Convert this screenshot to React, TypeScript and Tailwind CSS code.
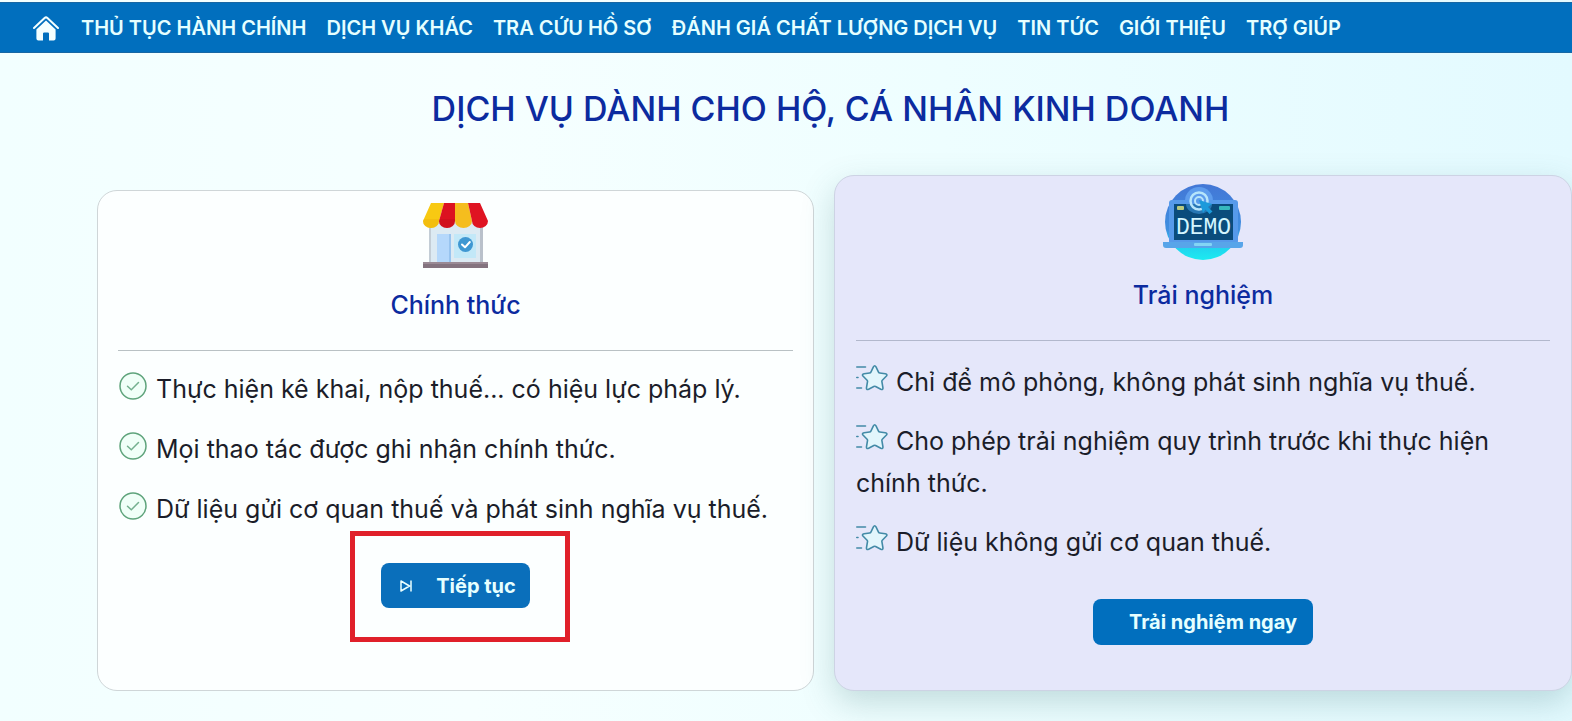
import type { ReactNode } from "react";

const NAV_ITEMS = [
  "THỦ TỤC HÀNH CHÍNH",
  "DỊCH VỤ KHÁC",
  "TRA CỨU HỒ SƠ",
  "ĐÁNH GIÁ CHẤT LƯỢNG DỊCH VỤ",
  "TIN TỨC",
  "GIỚI THIỆU",
  "TRỢ GIÚP",
];

function HomeIcon() {
  return (
    <svg viewBox="0 0 26 26" className="h-[26px] w-[26px]" aria-hidden="true">
      <path
        d="M1 13 L11.6 3 Q13 1.8 14.4 3 L25 13"
        fill="none"
        stroke="#f4ffff"
        strokeWidth="2"
        strokeLinecap="round"
        strokeLinejoin="round"
      />
      <path
        d="M13 5.6 L22.6 14.6 V23.4 Q22.6 25.4 20.6 25.4 H16 V18.6 Q16 17.4 14.8 17.4 H11.2 Q10 17.4 10 18.6 V25.4 H5.4 Q3.4 25.4 3.4 23.4 V14.6 Z"
        fill="#f4ffff"
      />
    </svg>
  );
}

function StoreIcon() {
  return (
    <svg viewBox="0 0 66 68" className="h-[68px] w-[66px]" aria-hidden="true">
      <rect x="6" y="20" width="54" height="42" fill="#dceaf3" />
      <rect x="6" y="26" width="2" height="36" fill="#c3cdd6" />
      <rect x="57" y="26" width="3" height="36" fill="#b9c1cb" />
      <rect x="14" y="33" width="14" height="29" fill="#b5d8fb" />
      <rect x="26" y="33" width="2" height="29" fill="#98c4ef" />
      <rect x="31" y="33" width="22" height="24" fill="#c2e8f8" />
      <path d="M8 2 H21 L16 20 A8 7 0 0 1 0 20 Z" fill="#f8c912" />
      <path d="M21 2 H32 V20 A8 7 0 0 1 16 20 Z" fill="#dc1220" />
      <path d="M32 2 H45 L49 20 A8.500 7 0 0 1 32 20 Z" fill="#f5bd1e" />
      <path d="M45 2 H57 L65 20 A8 7 0 0 1 49 20 Z" fill="#df1422" />
      <path d="M16 20 A8 7 0 0 1 0 20 L1 18 H16.500 Z" fill="#edb40c" opacity=".5" />
      <path d="M32 20 A8 7 0 0 1 16 20 L16.500 18 H32 Z" fill="#b90d18" opacity=".3" />
      <circle cx="42.500" cy="43.500" r="7.500" fill="#3f97d2" />
      <path
        d="M39 43.500 L42 46.300 L46.800 41"
        fill="none"
        stroke="#fff"
        strokeWidth="2"
        strokeLinecap="round"
        strokeLinejoin="round"
      />
      <rect x="0" y="61" width="65" height="6" fill="#84737f" />
      <rect x="0" y="61" width="65" height="2" fill="#9a8a95" />
    </svg>
  );
}

function DemoIcon() {
  return (
    <svg viewBox="0 0 80 78" className="h-[78px] w-20" aria-hidden="true">
      <defs>
        <linearGradient id="demo-disc" x1="0" y1="0" x2="0" y2="1">
          <stop offset="0" stopColor="#4377d6" />
          <stop offset=".6" stopColor="#3f8fe0" />
          <stop offset=".8" stopColor="#22cfee" />
          <stop offset="1" stopColor="#1cebf0" />
        </linearGradient>
      </defs>
      <circle cx="40" cy="39" r="38" fill="url(#demo-disc)" />
      <circle cx="36" cy="18" r="14" fill="#5d9ced" />
      <rect x="6" y="17" width="69" height="44" rx="3" fill="#569aea" />
      <rect x="11" y="21" width="59" height="36" fill="#0a4c7c" />
      <path d="M23 21 A13 10 0 0 0 49 21 Z" fill="#2777b4" />
      <circle cx="36" cy="18" r="8.500" fill="none" stroke="#b6e5fb" strokeWidth="2.500" />
      <circle cx="36" cy="18" r="4" fill="none" stroke="#b6e5fb" strokeWidth="2" />
      <path
        d="M36 17 L49 21 L45 24 L49.500 28.500 L46.500 31 L42.500 26.500 L40 30 Z"
        fill="#1b9adb"
      />
      <rect x="14" y="23" width="7" height="4" rx="1" fill="#b9ca80" />
      <rect x="56" y="23" width="11" height="4" rx="1" fill="#36b9bd" />
      <text
        x="40.500"
        y="51"
        textAnchor="middle"
        fontFamily="Liberation Mono, monospace"
        fontSize="23"
        fill="#d3f5ff"
      >
        DEMO
      </text>
      <path d="M0 59 H80 V62 Q80 65 77 65 H3 Q0 65 0 62 Z" fill="#58a5e9" />
      <rect x="31" y="60" width="18" height="3" rx="1" fill="#83d5f5" />
    </svg>
  );
}

function CheckCircleIcon() {
  return (
    <svg viewBox="0 0 30 30" className="mr-2 inline-block h-[30px] w-[30px] align-[-3px]" aria-hidden="true">
      <circle cx="15" cy="15" r="13" fill="#f0fff8" stroke="#5fa47c" strokeWidth="1.500" />
      <path
        d="M9.500 15.300 L13.300 18.800 L20.500 11.500"
        fill="none"
        stroke="#74b08f"
        strokeWidth="1.500"
        strokeLinecap="round"
      />
    </svg>
  );
}

function ShootingStarIcon() {
  return (
    <svg viewBox="0 0 32 28" className="mr-2 inline-block h-7 w-8 align-[-1px]" aria-hidden="true">
      <g fill="none" stroke="#438aa7" strokeWidth="1.600" strokeLinecap="round" strokeLinejoin="round">
        <path
          d="M17.400 2.900 Q18.700 .6 20 2.900 L22.500 8.100 Q22.900 8.900 23.800 9 L29.300 9.800 Q32 10.400 30.200 12.300 L26.300 16.200 Q25.700 16.800 25.900 17.700 L26.900 23.700 Q27.200 26.300 24.800 25.200 L19.600 22.500 Q18.700 22.100 17.800 22.500 L12.600 25.200 Q10.200 26.300 10.500 23.700 L11.500 17.700 Q11.700 16.800 11.100 16.200 L7.200 12.300 Q5.400 10.400 8.100 9.800 L13.600 9 Q14.500 8.900 14.900 8.100 Z"
          fill="#e2f6fc"
        />
        <path d="M.8 3 H9.500 M.8 13.500 H2 M.8 24 H5.500" />
      </g>
    </svg>
  );
}

function SkipIcon() {
  return (
    <svg viewBox="0 0 12 14" className="h-[14px] w-3" aria-hidden="true">
      <path
        d="M1 2 L9.500 7 L1 12 Z M11 1.500 V12.500"
        fill="none"
        stroke="#eaffff"
        strokeWidth="1.500"
        strokeLinejoin="round"
      />
    </svg>
  );
}

function Feature({ icon, children }: { icon: ReactNode; children: ReactNode }) {
  return (
    <li>
      {icon}
      {children}
    </li>
  );
}

export default function App() {
  return (
    <div className="min-h-screen overflow-x-hidden bg-[linear-gradient(90deg,#f2ffff_0%,#f6ffff_30%,#eefeff_60%,#e3faff_100%)] pt-[2px] font-['Inter','Noto_Sans',sans-serif] text-[#1b1d29]">
      <header className="border-y border-[#1767a4] bg-[#016fbe]">
        <nav className="flex h-[49px] items-center gap-5 pl-[33px] text-xl font-semibold whitespace-nowrap text-[#e6ffff]">
          <a href="#home" aria-label="Trang chủ" className="pr-[2px]">
            <HomeIcon />
          </a>
          {NAV_ITEMS.map((item) => (
            <a key={item} href="#nav">
              {item}
            </a>
          ))}
        </nav>
      </header>

      <main className="pb-8 pl-[97px]">
        <h1 className="pt-8 pr-2 text-center text-[34px] leading-[48px] font-medium text-[#0c2b9f]">
          DỊCH VỤ DÀNH CHO HỘ, CÁ NHÂN KINH DOANH
        </h1>

        <div className="mt-[42px] grid grid-cols-[717fr_738fr] gap-5">
          <section className="mt-[15px] rounded-[20px] border border-[#cfd6d8] bg-[#fcffff] px-5 pt-[10px]">
            <div className="flex justify-center">
              <StoreIcon />
            </div>
            <h2 className="mt-4 text-center text-[25px] leading-10 font-medium text-[#0c2b9f]">Chính thức</h2>
            <hr className="mt-[25px] border-[#b9c1c4]" />
            <ul className="mt-[17px] flex flex-col gap-[18px] text-[25px] leading-[42px]">
              <Feature icon={<CheckCircleIcon />}>Thực hiện kê khai, nộp thuế... có hiệu lực pháp lý.</Feature>
              <Feature icon={<CheckCircleIcon />}>Mọi thao tác được ghi nhận chính thức.</Feature>
              <Feature icon={<CheckCircleIcon />}>Dữ liệu gửi cơ quan thuế và phát sinh nghĩa vụ thuế.</Feature>
            </ul>
            <div className="mt-[33px] flex justify-center">
              <div className="relative">
                <button
                  type="button"
                  className="flex h-[45px] items-center gap-6 rounded-lg bg-[#0a6fbb] pr-[14px] pl-[19px] text-xl font-bold text-[#e6ffff]"
                >
                  <SkipIcon />
                  Tiếp tục
                </button>
                <div className="pointer-events-none absolute -top-8 -right-10 -bottom-[34px] -left-[31px] border-5 border-[#e0202a]" />
              </div>
            </div>
          </section>

          <section className="rounded-[20px] border border-[#cdd3e4] bg-[#e5e7fa] px-[21px] pt-[7px] pb-[45px] shadow-[0_12px_32px_rgba(60,120,120,0.25)]">
            <div className="flex justify-center">
              <DemoIcon />
            </div>
            <h2 className="mt-[14px] text-center text-[25px] leading-10 font-medium text-[#0c2b9f]">Trải nghiệm</h2>
            <hr className="mt-[25px] border-[#b2b8cc]" />
            <ul className="mt-5 flex flex-col gap-[17px] text-[25px] leading-[42px]">
              <Feature icon={<ShootingStarIcon />}>Chỉ để mô phỏng, không phát sinh nghĩa vụ thuế.</Feature>
              <Feature icon={<ShootingStarIcon />}>
                Cho phép trải nghiệm quy trình trước khi thực hiện chính thức.
              </Feature>
              <Feature icon={<ShootingStarIcon />}>Dữ liệu không gửi cơ quan thuế.</Feature>
            </ul>
            <div className="mt-9 flex justify-center">
              <button
                type="button"
                className="h-[46px] rounded-lg bg-[#016fbe] pr-4 pl-9 text-xl font-bold text-[#e6ffff]"
              >
                Trải nghiệm ngay
              </button>
            </div>
          </section>
        </div>
      </main>
    </div>
  );
}
